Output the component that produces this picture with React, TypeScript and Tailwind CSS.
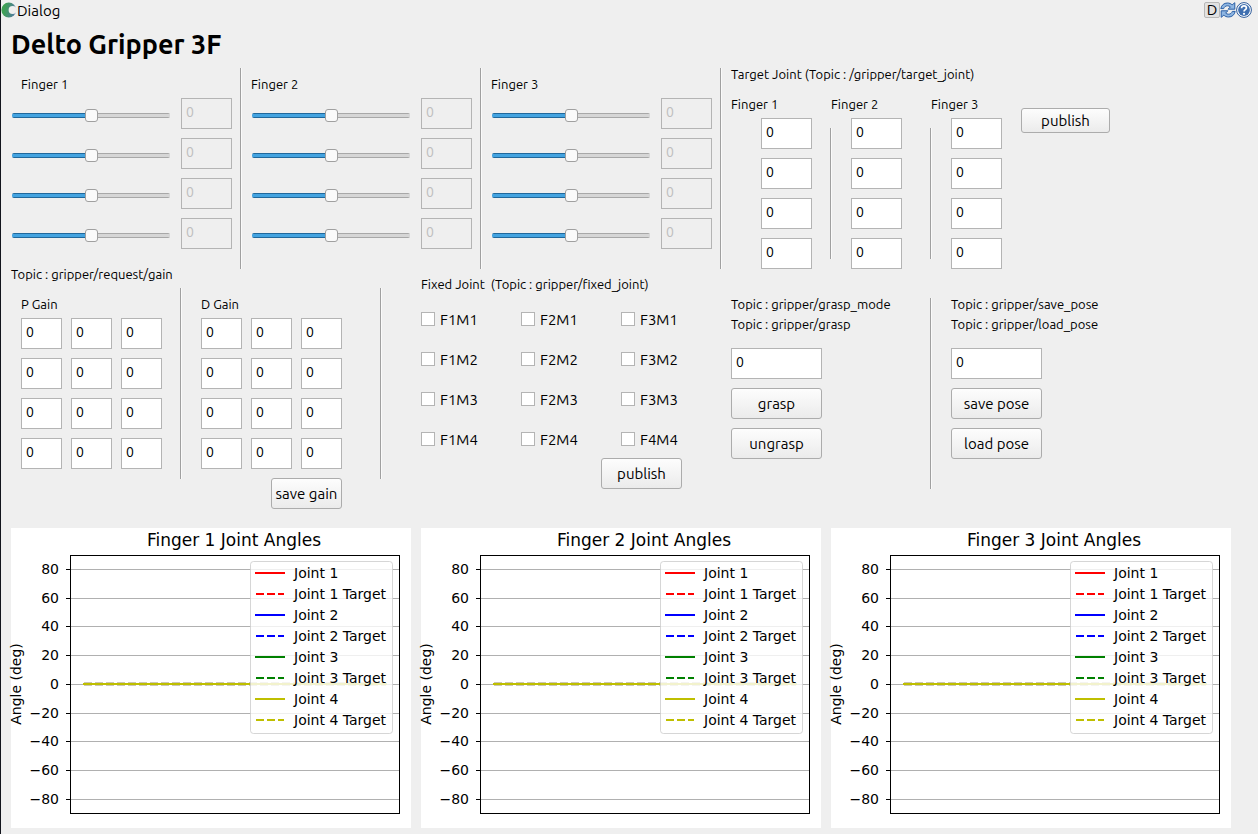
import React, { useState } from "react";

const fieldBase =
  "h-[31px] border border-[#b4b4b4] bg-white pb-[3px] pl-1 text-sm text-black outline-none disabled:bg-[#efefef] disabled:text-[#bebebe]";

type FieldProps = { label: string; className: string; disabled?: boolean };

function Field({ label, className, disabled }: FieldProps) {
  return (
    <input
      type="text"
      aria-label={label}
      defaultValue="0"
      disabled={disabled}
      className={`${fieldBase} ${className}`}
    />
  );
}

function PushButton({ className, children }: { className: string; children: React.ReactNode }) {
  return (
    <button
      type="button"
      className={`flex items-center justify-center rounded-[3px] border border-[#acacac] bg-linear-to-b from-[#fdfdfd] to-[#ebebeb] text-[15px] leading-5 whitespace-nowrap text-black ${className}`}
    >
      {children}
    </button>
  );
}

function Divider({ className }: { className: string }) {
  return <div className={`w-[2px] shrink-0 border-r border-l border-r-[#fafafa] border-l-[#a0a0a0] ${className}`} />;
}

function Caption({ className = "", children }: { className?: string; children: React.ReactNode }) {
  return <p className={`pb-[2px] text-[13px] leading-[18px] whitespace-pre ${className}`}>{children}</p>;
}

function JointSlider({ label }: { label: string }) {
  const [value, setValue] = useState(50);
  return (
    <input
      type="range"
      aria-label={label}
      min={0}
      max={100}
      value={value}
      onChange={(e) => setValue(Number(e.target.value))}
      style={{ "--fill": `${value}%` } as React.CSSProperties}
      className="mt-1 h-[13px] min-w-0 flex-1 appearance-none bg-transparent [&::-webkit-slider-runnable-track]:h-[5px] [&::-webkit-slider-runnable-track]:rounded-[2px] [&::-webkit-slider-runnable-track]:bg-[linear-gradient(#20689c_1px,#43a3e0_1px,#43a3e0_4px,#20689c_4px),linear-gradient(#a8a8a8_1px,#d6d6d6_1px,#d6d6d6_4px,#a8a8a8_4px)] [&::-webkit-slider-runnable-track]:bg-[length:var(--fill)_100%,100%_100%] [&::-webkit-slider-runnable-track]:bg-no-repeat [&::-webkit-slider-thumb]:mt-[-4px] [&::-webkit-slider-thumb]:size-[13px] [&::-webkit-slider-thumb]:appearance-none [&::-webkit-slider-thumb]:rounded-[3px] [&::-webkit-slider-thumb]:border [&::-webkit-slider-thumb]:border-[#a0a0a0] [&::-webkit-slider-thumb]:bg-[#fafafa]"
    />
  );
}

const joints = [1, 2, 3, 4];

function FingerPanel({ finger }: { finger: number }) {
  return (
    <section className="mt-[3px] flex">
      <div className="flex-1 pt-[7px] pr-2 pb-5 pl-[10px]">
        <Caption className={finger === 1 ? "pl-[9px]" : "-ml-px"}>{`Finger ${finger}`}</Caption>
        <div className="mt-[3px] flex flex-col gap-[9px]">
          {joints.map((j) => (
            <div key={j} className="flex items-center gap-[11px]">
              <JointSlider label={`Finger ${finger} joint ${j} position`} />
              <Field label={`Finger ${finger} joint ${j} value`} className="w-[51px]" disabled />
            </div>
          ))}
        </div>
      </div>
      <Divider className="" />
    </section>
  );
}

function TargetColumn({ finger }: { finger: number }) {
  const first = finger === 1;
  return (
    <div className={first ? "w-[99px]" : "w-[100px]"}>
      <Caption className={first ? "" : "pl-px"}>{`Finger ${finger}`}</Caption>
      <div className="mt-[3px] flex">
        {!first && <Divider className="mt-[10px] mb-[10px]" />}
        <div className={`flex flex-col gap-[9px] ${first ? "ml-[30px]" : "ml-[19px]"}`}>
          {joints.map((j) => (
            <Field key={j} label={`Target finger ${finger} joint ${j}`} className="w-[51px]" />
          ))}
        </div>
      </div>
    </div>
  );
}

function TargetJoint() {
  return (
    <section className="pl-[9px]">
      <Caption>Target Joint (Topic : /gripper/target_joint)</Caption>
      <div className="mt-[10px] flex">
        <TargetColumn finger={1} />
        <TargetColumn finger={2} />
        <TargetColumn finger={3} />
        <PushButton className="mt-[13px] ml-[-9px] h-[25px] w-[89px]">publish</PushButton>
      </div>
    </section>
  );
}

function GainBlock({ name, children }: { name: string; children?: React.ReactNode }) {
  return (
    <div className="flex flex-col pt-[10px] pl-[19px]">
      <Caption>{`${name} Gain`}</Caption>
      <div className="mt-[3px] grid grid-cols-[41px_41px_41px] gap-[9px]">
        {joints.flatMap((j) =>
          [1, 2, 3].map((f) => <Field key={`${j}-${f}`} label={`${name} gain finger ${f} joint ${j}`} className="w-full" />),
        )}
      </div>
      {children}
    </div>
  );
}

function GainSection() {
  return (
    <section>
      <Caption className="pl-[9px]">Topic : gripper/request/gain</Caption>
      <div className="flex">
        <GainBlock name="P" />
        <Divider className="mt-[3px] ml-[18px] h-[191px]" />
        <GainBlock name="D">
          <PushButton className="mt-[9px] h-[31px] w-[71px] self-end">save gain</PushButton>
        </GainBlock>
        <Divider className="mt-[3px] ml-auto h-[191px]" />
      </div>
    </section>
  );
}

const fixedJoints = ["F1M1", "F2M1", "F3M1", "F1M2", "F2M2", "F3M2", "F1M3", "F2M3", "F3M3", "F1M4", "F2M4", "F4M4"];

function FixedJoint() {
  return (
    <section className="pt-[10px] pl-[39px]">
      <Caption>{"Fixed Joint  (Topic : gripper/fixed_joint)"}</Caption>
      <div className="mt-[15px] grid grid-cols-[100px_100px_81px] gap-y-5">
        {fixedJoints.map((name) => (
          <label key={name} className="flex h-5 items-center gap-[5px] text-[15px] leading-5">
            <input
              type="checkbox"
              className="mb-[2px] size-[14px] appearance-none border border-[#b4b4b4] bg-white checked:bg-[#43a3e0]"
            />
            {name}
          </label>
        ))}
      </div>
      <PushButton className="mt-2 ml-[180px] h-[31px] w-[81px]">publish</PushButton>
    </section>
  );
}

type ActionProps = { topics: string[]; field: string; actions: string[] };

function ActionColumn({ topics, field, actions }: ActionProps) {
  return (
    <div className="pt-[30px]">
      {topics.map((t) => (
        <Caption key={t}>{`Topic : ${t}`}</Caption>
      ))}
      <div className="mt-[13px] flex flex-col gap-[9px]">
        <Field label={field} className="w-[91px]" />
        {actions.map((a) => (
          <PushButton key={a} className="h-[31px] w-[91px]">
            {a}
          </PushButton>
        ))}
      </div>
    </div>
  );
}

const gridLines = [
  { value: "80", y: 41.5 },
  { value: "60", y: 70.5 },
  { value: "40", y: 98.5 },
  { value: "20", y: 127.5 },
  { value: "0", y: 156.5 },
  { value: "−20", y: 185.5 },
  { value: "−40", y: 213.5 },
  { value: "−60", y: 242.5 },
  { value: "−80", y: 271.5 },
];

const seriesColors = ["#ff0000", "#0000ff", "#008000", "#bfbf00"];

function AngleChart({ finger }: { finger: number }) {
  return (
    <svg
      viewBox="0 0 400 300"
      className="block w-full overflow-visible bg-white font-['DejaVu_Sans',sans-serif]"
      role="img"
      aria-label={`Finger ${finger} joint angles`}
    >
      <text x="223" y="18" fontSize="17" textAnchor="middle">{`Finger ${finger} Joint Angles`}</text>
      <text transform="translate(10 156) rotate(-90)" fontSize="14" textAnchor="middle">
        Angle (deg)
      </text>
      {gridLines.map((g) => (
        <g key={g.value}>
          <line x1="60" x2="388" y1={g.y} y2={g.y} stroke="#b0b0b0" />
          <line x1="55" x2="60" y1={g.y} y2={g.y} stroke="#000" />
          <text x="48" y={g.y + 4.4} fontSize="14" textAnchor="end">
            {g.value}
          </text>
        </g>
      ))}
      <line x1="73" x2="375" y1="156" y2="156" stroke="#cbc6b4" strokeWidth="4" strokeDasharray="8 3" />
      <line x1="73" x2="375" y1="156" y2="156" stroke="#bfbf00" strokeWidth="2" strokeLinecap="square" />
      <rect x="59.5" y="27.5" width="329" height="258" fill="none" stroke="#000" />
      <rect x="239.5" y="33.5" width="142" height="172" rx="3" fill="#fff" fillOpacity="0.8" stroke="#ccc" strokeOpacity="0.8" />
      {seriesColors.map((color, i) => (
        <g key={color}>
          <line x1="244" x2="274" y1={45 + i * 42} y2={45 + i * 42} stroke={color} strokeWidth="2" />
          <text x="283" y={50 + i * 42} fontSize="14">{`Joint ${i + 1}`}</text>
          <line x1="245" x2="273" y1={66 + i * 42} y2={66 + i * 42} stroke={color} strokeWidth="2" strokeDasharray="8 3" />
          <text x="283" y={71 + i * 42} fontSize="14">{`Joint ${i + 1} Target`}</text>
        </g>
      ))}
    </svg>
  );
}

function LogoIcon() {
  return (
    <svg viewBox="0 0 16 16" className="size-4" aria-hidden="true">
      <defs>
        <linearGradient id="logo" x1="0" x2="1" y1="0.4" y2="0.6">
          <stop offset="0.2" stopColor="#3fa055" />
          <stop offset="1" stopColor="#5577a8" />
        </linearGradient>
      </defs>
      <circle cx="7.8" cy="8" r="7.4" fill="url(#logo)" />
      <circle cx="11.6" cy="8" r="4" fill="#efefef" />
    </svg>
  );
}

function ReloadIcon() {
  return (
    <svg viewBox="0 0 16 16" className="size-4" aria-hidden="true">
      <g fill="#8fb6e2" stroke="#2a5fa6" strokeWidth="1" strokeLinejoin="round">
        <path d="M.8 6.600C1.500 3 4.200 1 7.400 1c2 0 3.600.7 4.700 1.900L14.800.7v6.500H8.100l2.300-2.300C9.600 4.100 8.600 3.800 7.500 3.800 5.700 3.800 4.300 4.800 3.700 6.600z" />
        <path d="M15.200 9.400c-.7 3.600-3.400 5.600-6.600 5.600-2 0-3.600-.7-4.700-1.900L1.200 15.300V8.800h6.700l-2.300 2.300c.8.800 1.800 1.100 2.900 1.100 1.800 0 3.200-1 3.800-2.800z" />
      </g>
    </svg>
  );
}

function HelpIcon() {
  return (
    <svg viewBox="0 0 16 16" className="size-4" aria-hidden="true">
      <circle cx="8" cy="8" r="7.4" fill="#fff" stroke="#2d5a9a" strokeWidth="1" />
      <circle cx="8" cy="8" r="5.9" fill="#3f6fb0" />
      <path d="M5.600 6.200C5.600 4.600 6.600 3.800 8 3.800s2.400.9 2.400 2.200C10.400 7.700 8 7.700 8 9.600" fill="none" stroke="#fff" strokeWidth="1.700" />
      <circle cx="8" cy="11.800" r="1.100" fill="#fff" />
    </svg>
  );
}

export default function App() {
  return (
    <div className="min-h-screen border-l border-[#12141c] bg-[#efefef] font-['Ubuntu','Noto_Sans',sans-serif] text-black">
      <header className="flex h-5 items-center pr-[6px]">
        <LogoIcon />
        <span className="pt-px text-[15px] leading-5">Dialog</span>
        <div className="ml-auto flex items-center">
          <button
            type="button"
            aria-label="Dock"
            className="flex size-4 items-center justify-center rounded-[2px] border border-[#b8b8b8] bg-[#e2e2e2] text-[15px] leading-4"
          >
            D
          </button>
          <button type="button" aria-label="Reload">
            <ReloadIcon />
          </button>
          <button type="button" aria-label="Help">
            <HelpIcon />
          </button>
        </div>
      </header>
      <main className="pt-[2px] pr-[27px] pl-px">
        <h1 className="h-[43px] pl-[9px] text-[27px] leading-[44px] font-bold whitespace-nowrap">Delto Gripper 3F</h1>
        <div className="grid grid-cols-[240fr_240fr_240fr_509fr]">
          <FingerPanel finger={1} />
          <FingerPanel finger={2} />
          <FingerPanel finger={3} />
          <TargetJoint />
        </div>
        <div className="-mt-1 grid grid-cols-[380fr_340fr_210fr_299fr]">
          <GainSection />
          <FixedJoint />
          <section className="flex justify-between pl-[9px]">
            <ActionColumn
              topics={["gripper/grasp_mode", "gripper/grasp"]}
              field="Grasp mode"
              actions={["grasp", "ungrasp"]}
            />
            <Divider className="mt-[33px] h-[191px]" />
          </section>
          <section className="pl-[19px]">
            <ActionColumn
              topics={["gripper/save_pose", "gripper/load_pose"]}
              field="Pose number"
              actions={["save pose", "load pose"]}
            />
          </section>
        </div>
        <div className="mt-[19px] grid grid-cols-3 gap-[10px] pl-[9px]">
          <AngleChart finger={1} />
          <AngleChart finger={2} />
          <AngleChart finger={3} />
        </div>
      </main>
    </div>
  );
}
